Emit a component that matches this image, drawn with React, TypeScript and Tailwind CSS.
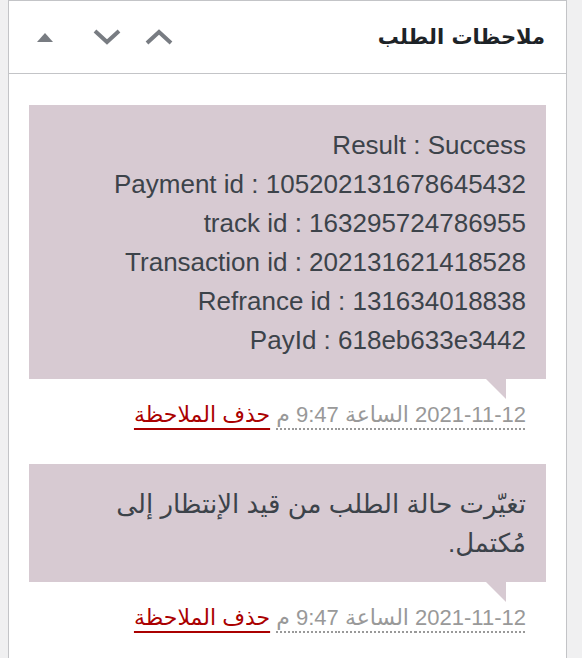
import React from 'react';

const notes = [
  {
    id: 1,
    lines: [
      'Result : Success',
      'Payment id : 105202131678645432',
      'track id : 163295724786955',
      'Transaction id : 202131621418528',
      'Refrance id : 131634018838',
      'PayId : 618eb633e3442',
    ],
    date: '2021-11-12 الساعة 9:47 م',
  },
  {
    id: 2,
    lines: ['تغيّرت حالة الطلب من قيد الإنتظار إلى', 'مُكتمل.'],
    date: '2021-11-12 الساعة 9:47 م',
  },
];

function Chevron({ up }: { up?: boolean }) {
  return (
    <svg width="28" height="16" viewBox="0 0 28 16" fill="none">
      <polyline
        points={up ? '2,14 14,3 26,14' : '2,2 14,13 26,2'}
        stroke="#787c82"
        strokeWidth="4"
        strokeLinejoin="miter"
      />
    </svg>
  );
}

export default function App() {
  return (
    <div className="min-h-[658px] bg-[#f0f0f1] font-['Liberation_Sans','DejaVu_Sans',sans-serif]">
      <div
        dir="rtl"
        className="ml-[8px] min-h-[658px] w-[559px] border border-[#c3c4c7] bg-white"
      >
        <div className="flex h-[73px] items-center justify-between border-b border-[#c3c4c7]">
          <h2 className="pr-[21px] pt-[2px] text-[21px] font-bold text-[#1d2327] font-['DejaVu_Sans',sans-serif]">
            ملاحظات الطلب
          </h2>
          <div className="flex h-full items-center">
            <button className="flex h-full w-[52px] items-center justify-center">
              <Chevron up />
            </button>
            <button className="flex h-full w-[52px] items-center justify-center">
              <Chevron />
            </button>
            <button className="flex h-full w-[72px] items-center justify-center">
              <svg width="16" height="9" viewBox="0 0 16 9">
                <polygon points="8,0 16,9 0,9" fill="#787c82" />
              </svg>
            </button>
          </div>
        </div>

        <ul className="pt-[31px]">
          {notes.map((n) => (
            <li key={n.id} className="mb-[14px] px-[20px]">
              <div className="relative bg-[#d7cad2] px-[20px] pt-[21px] pb-[19px] text-[26px] leading-[39px] text-[#3c434a]">
                {n.lines.map((l, i) => (
                  <div key={i}>{l}</div>
                ))}
                <span className="absolute bottom-[-20px] right-[40px] h-0 w-0 border-t-[20px] border-l-[20px] border-t-[#d7cad2] border-l-transparent" />
              </div>
              <p className="p-[20px] text-[22px] leading-[31px] text-[#999]">
                <span className="underline decoration-dotted decoration-2 underline-offset-[6px] decoration-[#999]">
                  {n.date}
                </span>{' '}
                <a href="#" className="text-[#a00] underline decoration-2 underline-offset-[6px]">
                  حذف الملاحظة
                </a>
              </p>
            </li>
          ))}
        </ul>
      </div>
    </div>
  );
}
